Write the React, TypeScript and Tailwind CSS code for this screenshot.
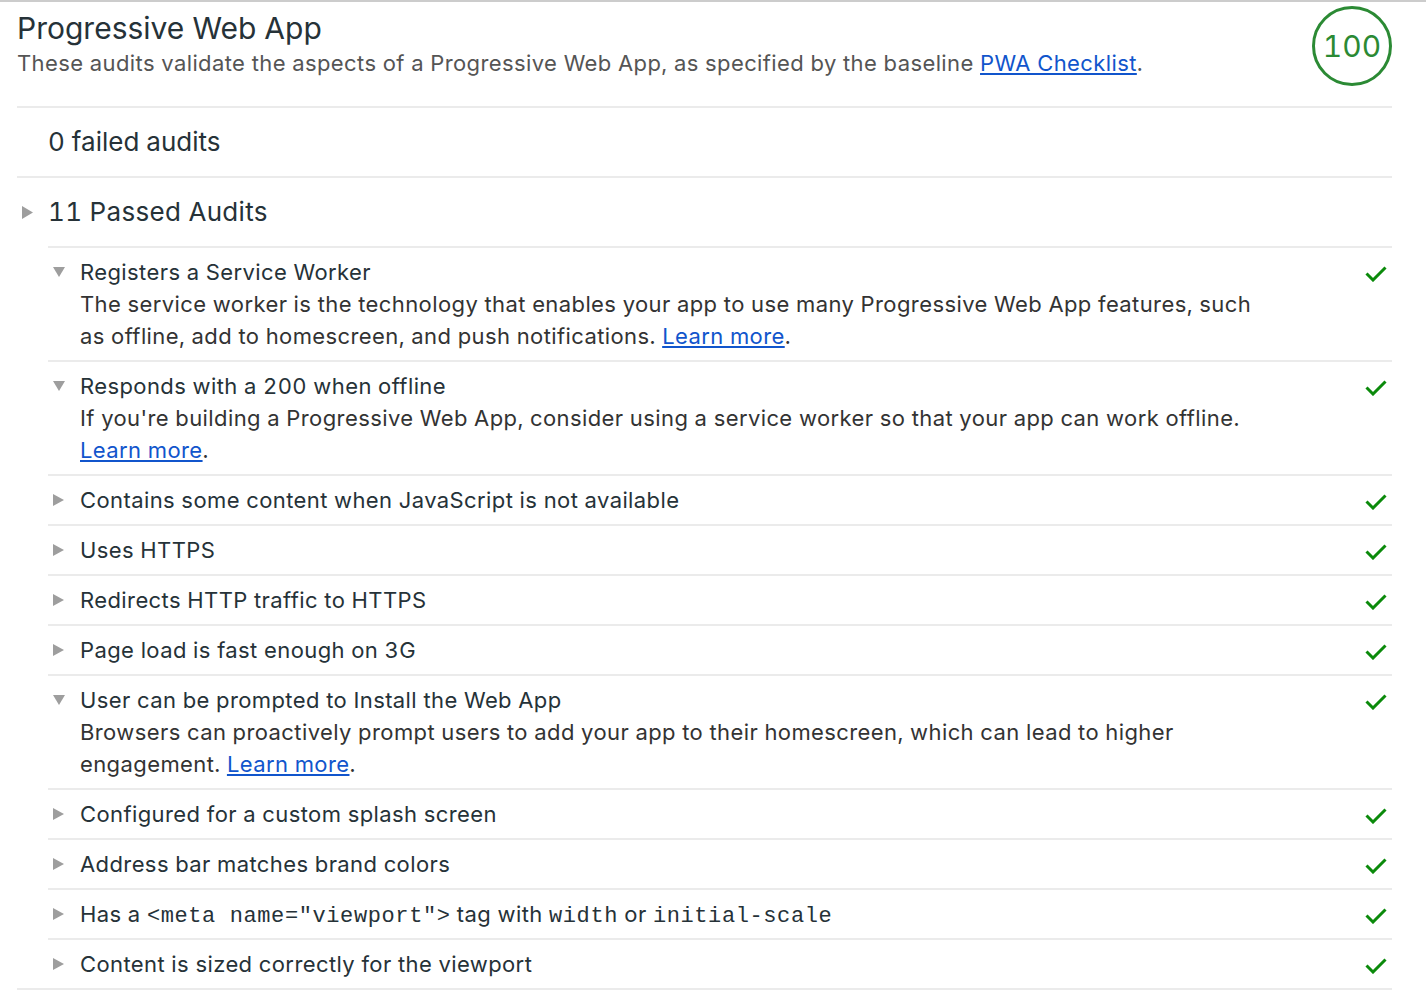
type Audit = {
  title: React.ReactNode;
  description?: string;
  open?: boolean;
};

const mono = "font-['Liberation_Mono',monospace] text-[22px] leading-none tracking-[0.6px]";

const audits: Audit[] = [
  {
    title: "Registers a Service Worker",
    open: true,
    description:
      "The service worker is the technology that enables your app to use many Progressive Web App features, such as offline, add to homescreen, and push notifications.",
  },
  {
    title: "Responds with a 200 when offline",
    open: true,
    description:
      "If you're building a Progressive Web App, consider using a service worker so that your app can work offline.",
  },
  { title: "Contains some content when JavaScript is not available" },
  { title: "Uses HTTPS" },
  { title: "Redirects HTTP traffic to HTTPS" },
  { title: "Page load is fast enough on 3G" },
  {
    title: "User can be prompted to Install the Web App",
    open: true,
    description:
      "Browsers can proactively prompt users to add your app to their homescreen, which can lead to higher engagement.",
  },
  { title: "Configured for a custom splash screen" },
  { title: "Address bar matches brand colors" },
  {
    title: (
      <>
        Has a <code className={mono}>{'<meta name="viewport">'}</code> tag with{" "}
        <code className={mono}>width</code> or <code className={mono}>initial-scale</code>
      </>
    ),
  },
  { title: "Content is sized correctly for the viewport" },
];

function Arrow({ open }: { open?: boolean }) {
  if (open) {
    return (
      <svg width="12" height="10" viewBox="0 0 12 10" className="block">
        <polygon points="0,0 12,0 6,10" fill="#9e9e9e" />
      </svg>
    );
  }
  return (
    <svg width="11" height="12" viewBox="0 0 11 12" className="block">
      <polygon points="0,0 11,6 0,12" fill="#9e9e9e" />
    </svg>
  );
}

function Check() {
  return (
    <svg width="22" height="16" viewBox="0 0 22 16" className="block">
      <polyline
        points="1.5,7.5 8,14 20.5,1.5"
        fill="none"
        stroke="#0b8a0b"
        strokeWidth="3"
      />
    </svg>
  );
}

function ScoreGauge({ score }: { score: number }) {
  return (
    <div className="relative h-[80px] w-[80px] shrink-0">
      <svg width="80" height="80" viewBox="0 0 80 80" className="absolute inset-0">
        <circle cx="40" cy="40" r="38.5" fill="none" stroke="#2b8a34" strokeWidth="3" />
      </svg>
      <div className="flex h-full w-full items-center justify-center text-[30px] tabular-nums text-[#2b8a34]">
        {score}
      </div>
    </div>
  );
}

function AuditRow({ audit }: { audit: Audit }) {
  return (
    <div className="flex border-t-2 border-[#ebebeb] py-[8px]">
      <div className="flex h-[32px] w-[32px] shrink-0 items-center pl-[5px]">
        <Arrow open={audit.open} />
      </div>
      <div className="flex-1 text-[22px] leading-[32px] tracking-[0.4px] text-[#263238]">
        <div>{audit.title}</div>
        {audit.open && audit.description && (
          <p className="max-w-[1180px] text-[#333333]">
            {audit.description}{" "}
            <a href="#" className="text-[#1155cc] underline">
              Learn more
            </a>
            .
          </p>
        )}
      </div>
      <div className="shrink-0 pt-[10px] pr-[5px]">
        <Check />
      </div>
    </div>
  );
}

export default function App() {
  return (
    <div className="min-h-screen border-t-2 border-[#cccccc] bg-white font-['Inter',sans-serif] tabular-nums text-[#263238]">
      <div className="pl-[17px] pr-[34px]">
        <header className="flex items-start justify-between border-b-2 border-[#ebebeb] pt-[4px] pb-[20px]">
          <div className="mt-[5px]">
            <h1 className="text-[30px] leading-[34px]">Progressive Web App</h1>
            <p className="mt-[2px] text-[22px] leading-[32px] tracking-[0.4px] text-[#555555]">
              These audits validate the aspects of a Progressive Web App, as specified by the baseline{" "}
              <a href="#" className="text-[#1155cc] underline">
                PWA Checklist
              </a>
              .
            </p>
          </div>
          <ScoreGauge score={100} />
        </header>

        <div className="border-b-2 border-[#ebebeb] py-[18px] pl-[31px] text-[26px] leading-[32px]">
          0 failed audits
        </div>

        <section className="border-b-2 border-[#ebebeb]">
          <div className="flex h-[68px] items-center">
            <div className="w-[31px] pl-[5px]">
              <svg width="11" height="13" viewBox="0 0 11 13" className="block">
                <polygon points="0,0 11,6.5 0,13" fill="#9e9e9e" />
              </svg>
            </div>
            <span className="text-[26px] leading-[32px] tracking-[0.3px]">11 Passed Audits</span>
          </div>
          <div className="ml-[31px]">
            {audits.map((audit, idx) => (
              <AuditRow key={idx} audit={audit} />
            ))}
          </div>
        </section>
      </div>
    </div>
  );
}
